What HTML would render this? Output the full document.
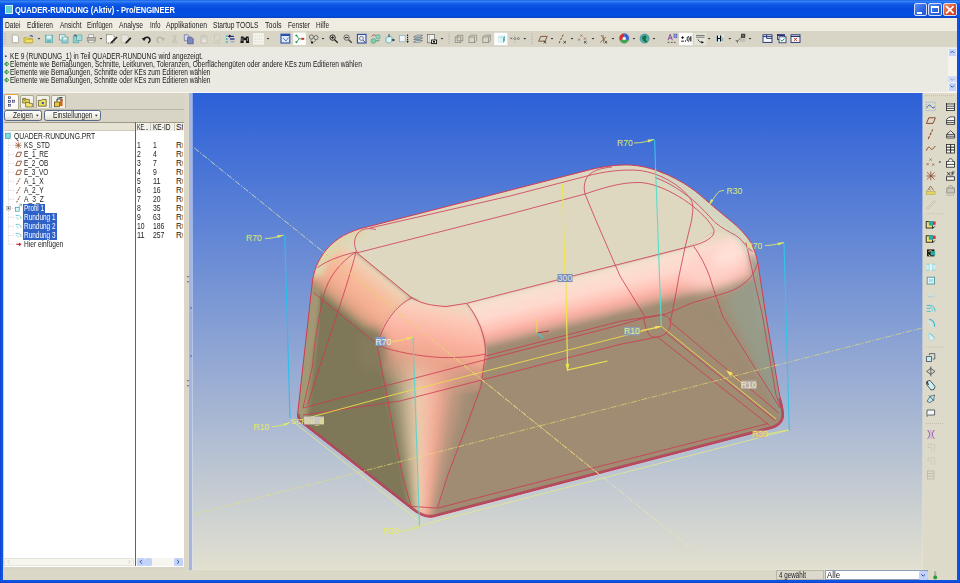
<!DOCTYPE html>
<html><head><meta charset="utf-8">
<style>
*{box-sizing:border-box;margin:0;padding:0}
html,body{width:960px;height:583px;overflow:hidden;background:#ECE9D8}
body{position:relative;font-family:"Liberation Sans",sans-serif;font-size:8.2px;color:#222;line-height:1.15}
.abs{position:absolute}
.t{position:absolute;white-space:pre;transform-origin:0 50%;line-height:1.15}
#title{left:0;top:0;width:960px;height:18px;background:linear-gradient(#1E62E6 0,#3380F6 8%,#0F5AE6 22%,#034ADE 50%,#0450E2 85%,#0A42C6 100%)}
#menubar{left:3px;top:18px;width:954px;height:13px;background:#EFEDE2}
#toolbar{left:3px;top:31px;width:954px;height:16px;background:#D8D5C7}
#msg{left:3px;top:47px;width:954px;height:46px;background:#EBEAE2}
#lframe{left:0;top:18px;width:3px;height:565px;background:linear-gradient(90deg,#0A3FD0,#1458E4 60%,#0A4FDB)}
#rframe{left:957px;top:18px;width:3px;height:565px;background:linear-gradient(90deg,#0A4FDB,#1458E4 40%,#0A3FD0)}
#bframe{left:0;top:580px;width:960px;height:3px;background:linear-gradient(#0A4FDB,#1458E4 40%,#0A3FD0)}
#leftpanel{left:3px;top:93px;width:181px;height:487px;background:#D8D5C6}
#split1{left:184px;top:93px;width:4.5px;height:477px;background:#DAD7C8}
#split2{left:188.5px;top:93px;width:4.5px;height:477px;background:linear-gradient(90deg,#A6B5DF 0,#A6B5DF 75%,#DCE5FA 80%,#DCE5FA 100%)}
#rtool{left:922.5px;top:93px;width:34.5px;height:487px;background:#DDDACA}
#status{left:3px;top:569.5px;width:920px;height:10.5px;background:#DBD8C8}
.wb{position:absolute;top:3px;width:13.5px;height:13.4px;border:0.8px solid #D4DEFC;border-radius:2px}
.btn{position:absolute;top:109.5px;height:11px;border:1px solid #5A6A8A;border-radius:2.5px;background:linear-gradient(#FFFFFF,#F2F0E6 60%,#DDD9CB)}
.sel{position:absolute;left:23px;height:9px;background:#2F62C8}
</style></head><body>
<div id="title" class="abs"></div>
<div class="abs" style="left:4.5px;top:5px;width:8px;height:8.5px;background:#5CCFD2;border:1px solid #DFF4F6"></div>
<div class="wb" style="left:913.5px;background:linear-gradient(135deg,#5B90F5,#2A62E0 60%,#2456D0)"><div class="abs" style="left:2.5px;top:7.5px;width:5px;height:2px;background:#fff"></div></div>
<div class="wb" style="left:928px;background:linear-gradient(135deg,#5B90F5,#2A62E0 60%,#2456D0)"><div class="abs" style="left:2px;top:2px;width:7.5px;height:7px;border:1px solid #fff;border-top-width:2px"></div></div>
<div class="wb" style="left:943px;background:linear-gradient(135deg,#F09878,#D8502C 55%,#C23A1C)"><svg class="abs" style="left:0;top:0" width="11.5" height="11" viewBox="0 0 11.5 11"><path d="M2.2,2.2 L9.6,9.4 M9.6,2.2 L2.2,9.4" stroke="#fff" stroke-width="1.8"/></svg></div>
<div id="menubar" class="abs"></div>
<div id="toolbar" class="abs"></div>
<div id="msg" class="abs"></div>
<!-- msg scrollbar -->
<div class="abs" style="left:948px;top:47.5px;width:8.5px;height:44px;background:#F4F3EC"></div>
<div class="abs" style="left:948px;top:47.5px;width:8.5px;height:9.5px;background:#C6D4F8;border:0.5px solid #EEF2FF;border-radius:1.5px"></div>
<div class="abs" style="left:948px;top:82px;width:8.5px;height:9.5px;background:#C6D4F8;border:0.5px solid #EEF2FF;border-radius:1.5px"></div>
<div class="abs" style="left:948px;top:76px;width:8.5px;height:6px;background:#D4DDF6"></div>
<div id="leftpanel" class="abs"></div>
<!-- tabs -->
<div class="abs" style="left:3.5px;top:93.5px;width:15.5px;height:15.5px;background:#FBFAF6;border:1px solid #A8A594;border-bottom:none;border-top:1.5px solid #E8A33A;border-radius:2px 2px 0 0"></div>
<div class="abs" style="left:20px;top:95px;width:14px;height:13px;background:#F4F2E8;border:1px solid #A8A594;border-bottom:none;border-radius:2px 2px 0 0"></div>
<div class="abs" style="left:35.5px;top:95px;width:14.5px;height:13px;background:#F4F2E8;border:1px solid #A8A594;border-bottom:none;border-radius:2px 2px 0 0"></div>
<div class="abs" style="left:51px;top:95px;width:14.5px;height:13px;background:#F4F2E8;border:1px solid #A8A594;border-bottom:none;border-radius:2px 2px 0 0"></div>
<div class="abs" style="left:3.5px;top:108.5px;width:180.5px;height:1px;background:#B9B6A6"></div>
<div class="btn" style="left:3.7px;width:38.5px"></div>
<div class="btn" style="left:43.7px;width:57.5px"></div>
<!-- tree -->
<div class="abs" style="left:3.5px;top:121.5px;width:180px;height:445px;background:#FFFFFF;border-top:1px solid #9D9A8A"></div>
<div class="abs" style="left:4px;top:122.5px;width:131px;height:8px;background:#E6E3D4;border-bottom:1px solid #CFCBBB"></div>
<div class="abs" style="left:134.7px;top:122px;width:1px;height:444px;background:#5F6470"></div>
<div class="abs" style="left:135.5px;top:122.5px;width:48px;height:8px;background:#F1F0E9"></div><div class="abs" style="left:150px;top:122.5px;width:0.6px;height:8px;background:#C9C6B8"></div>
<div class="abs" style="left:173.5px;top:122.5px;width:0.6px;height:8px;background:#C9C6B8"></div>
<div class="sel" style="top:204px;width:21.5px"></div>
<div class="sel" style="top:213px;width:33.5px"></div>
<div class="sel" style="top:222px;width:33.5px"></div>
<div class="sel" style="top:231px;width:33.5px"></div>
<!-- tree scrollbars -->
<div class="abs" style="left:4px;top:557.5px;width:130px;height:8.5px;background:#F6F5EE;border:0.5px solid #E6E4D8"></div>
<div class="abs" style="left:136px;top:557.5px;width:47.5px;height:8.5px;background:#F6F5F0"></div>
<div class="abs" style="left:136.5px;top:557.5px;width:8.5px;height:8.5px;background:#C3D2F8;border-radius:1.5px"></div>
<div class="abs" style="left:145px;top:557.5px;width:6.5px;height:8.5px;background:#C3D2F8;border-radius:1.5px"></div>
<div class="abs" style="left:173.5px;top:557.5px;width:9px;height:8.5px;background:#C3D2F8;border-radius:1.5px"></div>
<div id="split1" class="abs"></div><div id="split2" class="abs"></div>
<div id="rtool" class="abs"></div><div class="abs" style="left:3px;top:92px;width:954px;height:1px;background:#F6F5EE"></div>
<div id="status" class="abs"></div>
<div class="abs" style="left:776px;top:570px;width:48px;height:10px;background:#DDD9CC;border:0.5px solid #B9B6A6"></div>
<div class="abs" style="left:824.5px;top:570px;width:103px;height:10px;background:#FFFFFF;border:0.5px solid #8D9CB8"></div>
<div class="abs" style="left:919px;top:570.5px;width:8.5px;height:9px;background:#C3D2F8;border-radius:1.5px"></div>
<svg class="abs" style="left:0;top:0" width="960" height="583" viewBox="0 0 960 583">
<defs>
<linearGradient id="bg" x1="0" y1="93" x2="0" y2="569.5" gradientUnits="userSpaceOnUse">
<stop offset="0" stop-color="#2C60D8"/>
<stop offset="1" stop-color="#E2E0D0"/>
</linearGradient>
<clipPath id="vpc"><rect x="192.5" y="93" width="730" height="476.5"/></clipPath>
<path id="silp" d="M365,227.5 L585,171 C600,167 615,164.5 630,165 C650,166 672,175 690.3,187.6 C697,192 704,198.5 710.3,203.9 C718,210.5 726,217 732.9,222.7 C738,227 742,231 745.4,235.2 C749.5,240 752.5,245 754.2,250.2 C756,255 757,259 758,264 L766,316 L779.5,395 C782,404 784.3,412 783.2,418 C782,423.5 777.5,427 771,428.6 L433,517 C425,518.5 416,513 409,507 L302.3,423.4 C298.5,420.5 297.3,418 297.6,414 L307,330 L312,285 C313,272 318,260 326,250 C336,238 350,231 365,227.5 Z"/>
<clipPath id="sil"><use href="#silp"/></clipPath>
<filter id="b1" x="-20%" y="-20%" width="140%" height="140%"><feGaussianBlur stdDeviation="1.2"/></filter>
<filter id="b2" x="-20%" y="-20%" width="140%" height="140%"><feGaussianBlur stdDeviation="2"/></filter>
<filter id="b3" x="-20%" y="-20%" width="140%" height="140%"><feGaussianBlur stdDeviation="3"/></filter>
<filter id="b5" x="-30%" y="-30%" width="160%" height="160%"><feGaussianBlur stdDeviation="5"/></filter>
<filter id="b8" x="-40%" y="-40%" width="180%" height="180%"><feGaussianBlur stdDeviation="8"/></filter>
<filter id="b12" x="-50%" y="-50%" width="200%" height="200%"><feGaussianBlur stdDeviation="12"/></filter>
<linearGradient id="gband" gradientUnits="userSpaceOnUse" x1="575" y1="275.3" x2="588" y2="326">
<stop offset="0" stop-color="#E9DAC4"/>
<stop offset="0.12" stop-color="#F8E0D0"/>
<stop offset="0.38" stop-color="#FFD8CD"/>
<stop offset="0.58" stop-color="#FFC4B8"/>
<stop offset="0.69" stop-color="#FCB4A8"/>
<stop offset="0.8" stop-color="#E6A898"/>
<stop offset="0.9" stop-color="#C29C88" stop-opacity="0.85"/>
<stop offset="1" stop-color="#A08B73" stop-opacity="0"/>
</linearGradient>
<linearGradient id="glband" gradientUnits="userSpaceOnUse" x1="384" y1="275" x2="347.2" y2="319.8">
<stop offset="0" stop-color="#E6D8BC"/>
<stop offset="0.12" stop-color="#F2CDB0"/>
<stop offset="0.35" stop-color="#F8BA9C"/>
<stop offset="0.62" stop-color="#F4AE92"/>
<stop offset="0.8" stop-color="#DCA082"/>
<stop offset="0.92" stop-color="#A89070" stop-opacity="0.9"/>
<stop offset="1" stop-color="#7F7859" stop-opacity="0"/>
</linearGradient>
<linearGradient id="gsph" gradientUnits="userSpaceOnUse" x1="440" y1="305" x2="422" y2="392">
<stop offset="0" stop-color="#F0D6C0"/>
<stop offset="0.12" stop-color="#FCCAB8"/>
<stop offset="0.35" stop-color="#FCB5A2"/>
<stop offset="0.55" stop-color="#F2A891"/>
<stop offset="0.68" stop-color="#E8A089" stop-opacity="0.7"/>
<stop offset="1" stop-color="#E09C86" stop-opacity="0"/>
</linearGradient>
</defs>
<g clip-path="url(#vpc)">
<rect x="192" y="93" width="731" height="477" fill="url(#bg)"/>
<g id="obj" clip-path="url(#sil)">
<rect x="290" y="160" width="500" height="360" fill="#A08B73"/>
<!-- left face olive -->
<path d="M290,430 L300,280 L330,262 L390,330 L376,345 L412,516 L300,428 Z" fill="#7F7859" filter="url(#b1)"/>
<!-- right grey-green side -->
<path d="M727,300 L760,272 L790,300 L790,430 L779,414 Z" fill="#8F9A88" filter="url(#b3)"/>
<path d="M716,300 L756,272 L770,330 L782,412 Z" fill="#9E9C88" filter="url(#b8)" opacity="0.6"/>
<!-- column -->
<g filter="url(#b1)">
<path d="M366.0,300 L372.9,300 L382.2,350 L410.8,520 L409.0,520 L376.0,350 Z" fill="#857D5E"/>
<path d="M372.3,300 L379.2,300 L387.7,350 L412.3,520 L410.4,520 L381.6,350 Z" fill="#918869"/>
<path d="M378.6,300 L385.5,300 L393.2,350 L413.8,520 L411.9,520 L387.1,350 Z" fill="#9E9373"/>
<path d="M384.9,300 L391.8,300 L398.8,350 L415.2,520 L413.4,520 L392.6,350 Z" fill="#AFA180"/>
<path d="M391.2,300 L398.1,300 L404.4,350 L416.6,520 L414.8,520 L398.2,350 Z" fill="#C0AF8D"/>
<path d="M397.5,300 L404.4,300 L409.9,350 L418.1,520 L416.2,520 L403.8,350 Z" fill="#CFBA99"/>
<path d="M403.8,300 L410.7,300 L415.5,350 L419.5,520 L417.7,520 L409.3,350 Z" fill="#DDC2A2"/>
<path d="M410.1,300 L417.0,300 L421.0,350 L421.0,520 L419.1,520 L414.9,350 Z" fill="#EBC9AB"/>
<path d="M416.4,300 L423.3,300 L426.6,350 L422.4,520 L420.6,520 L420.4,350 Z" fill="#F0C4A9"/>
<path d="M422.7,300 L429.6,300 L432.1,350 L423.9,520 L422.1,520 L425.9,350 Z" fill="#F4BDA6"/>
<path d="M429.0,300 L435.9,300 L437.7,350 L425.3,520 L423.5,520 L431.5,350 Z" fill="#F4B6A0"/>
<path d="M435.3,300 L442.2,300 L443.2,350 L426.8,520 L424.9,520 L437.1,350 Z" fill="#F0AF99"/>
<path d="M441.6,300 L448.5,300 L448.8,350 L428.2,520 L426.4,520 L442.6,350 Z" fill="#EBA891"/>
<path d="M447.9,300 L454.8,300 L454.3,350 L429.7,520 L427.9,520 L448.1,350 Z" fill="#DDA28C"/>
<path d="M454.2,300 L461.1,300 L459.9,350 L431.1,520 L429.3,520 L453.7,350 Z" fill="#CF9E86"/>
<path d="M460.5,300 L467.4,300 L465.4,350 L432.6,520 L430.8,520 L459.2,350 Z" fill="#C19881"/>
<path d="M466.8,300 L473.7,300 L471.0,350 L434.0,520 L432.2,520 L464.8,350 Z" fill="#B7957D"/>
<path d="M473.1,300 L480.0,300 L476.5,350 L435.5,520 L433.6,520 L470.4,350 Z" fill="#AE9179"/>
<path d="M479.4,300 L486.3,300 L482.1,350 L436.9,520 L435.1,520 L475.9,350 Z" fill="#A58E76"/>
<path d="M485.7,300 L492.6,300 L487.6,350 L438.4,520 L436.6,520 L481.4,350 Z" fill="#A28C74"/>
</g>
<!-- top face beige -->
<path d="M300,300 L310,250 L365,220 L585,165 L640,160 L760,235 L765,262 L712,232 L700,240 L685,247.5 L575,276 L465,304 L445,306 L430,305 L410,296 L356,252 L330,275 Z" fill="#DED8C0"/>
<path d="M297,418 L307,330 L312,285 L316,266" fill="none" stroke="#A89C78" stroke-width="20" filter="url(#b2)" opacity="0.9"/>
<!-- left-front band -->
<path d="M356,252 L412,298 C400,303 385,318 377,345 L372,356 L300,300 L300,260 L330,240 Z" fill="url(#glband)" filter="url(#b2)"/>
<!-- silhouette-side strips -->
<path d="M314,276 C315,268 319,259 326,250 C336,238 350,231 365,227.5" fill="none" stroke="#DFD6B0" stroke-width="18" filter="url(#b3)"/>
<!-- sphere corner front-left -->
<path d="M412,298 C420,303 430,305.5 446,306.5 L465.5,303 C477,316 486,335 486.5,356 L478,392 L390,400 L376.6,345 C380,325 392,308 412,298 Z" fill="url(#gsph)" filter="url(#b1)"/>
<ellipse cx="372" cy="350" rx="14" ry="22" fill="#857C5E" filter="url(#b5)" opacity="0.9"/>
<!-- front band -->
<path d="M465.5,303 L685,247.5 L712,232 L750,238 L775,300 L700,322 L486,378 L486.5,356 C486,335 477,316 465.5,303 Z" fill="url(#gband)" filter="url(#b1)"/>
<!-- right sphere highlight -->
<ellipse cx="718" cy="266" rx="34" ry="20" fill="#FFD2C8" filter="url(#b8)" transform="rotate(-22 718 266)"/>
<ellipse cx="728" cy="255" rx="16" ry="9" fill="#FFE2D9" filter="url(#b5)" transform="rotate(-28 728 255)"/>
<!-- upper right fillet grey-beige -->
<path d="M662,172 C672,176 682,181 690.3,187.6 C697,192 704,198.5 710.3,203.9 C718,210.5 726,217 732.9,222.7 C738,227 742,231 745.4,235.2 C749.5,240 752.5,245 754.2,250.2" fill="none" stroke="#D4D6C2" stroke-width="19" filter="url(#b2)"/>
<path d="M748,250 L760,262 L770,330 L760,330 Z" fill="#99A090" filter="url(#b3)"/>
</g>
<use href="#silp" fill="none" stroke="#D23A55" stroke-width="1"/>
<g id="redlines" fill="none" stroke="#CE3852" stroke-width="0.9" opacity="0.88">
<path d="M370,228 L510,196 L585,176.5 C605,171 625,169 640,170.5 C660,173 680,185 690,198 C694,204 693,210 691.7,220 L685,247.5 L679,276 L675.7,295 L670.3,322"/>
<path d="M585,194 C583,186 585,178 590,174 C595,170 602,168 612,167"/>
<path d="M585,194 L595.8,220 L620,276 L645.8,318"/>
<path d="M357.7,252.7 L510,214 L585,194 C600,189 620,182 640,182.5 C660,183.5 690,200 707.5,220 C712,226 716,230 713,235 C709,241 697,245 687.5,247 L566.7,277.5 L466.7,303.3 L446,306.5 C430,305.5 420,303 412,298 L356,252"/>
<path d="M357.5,252.5 C353,246 354,238 358,233 C362,229 368,227.5 376,229.5"/>
<path d="M356,252 C343,255 328,260 317.5,267.5"/>
<path d="M356,252 C340,262 328,278 323.8,295 C318,320 314,345 312.5,366 L303,408"/>
<path d="M356,252 C352,268 345,290 337.6,312.7 L320,366 L307.5,405"/>
<path d="M313.5,292.5 L377,344"/>
<path d="M412,298 C400,303 385,318 377,345 L386,392 L402.5,476 L411,506"/>
<path d="M466.7,303.3 C477,316 486,335 485.4,353.3 L481,386.7 L468.75,420 L447.5,476 L437.5,507.5"/>
<path d="M376.6,345 C395,352 420,356.5 441.7,357.5 C460,358 475,356.5 485.4,354"/>
<path d="M303,408 L400,382 L486,359.5 L620,325 L643.8,318.2"/>
<path d="M485.4,354 L486.4,355.8 L620,321.3 L666.7,313.75"/>
<path d="M303,415 L400,401 L620,344.4 L657.5,337"/>
<path d="M643.8,317.5 C644,322 646,330 649.4,335 C652,337.5 655,337.5 657.5,337 C661,336.5 663,335.5 665,333.8 C668,331 670,329 670.3,325 C671,322 670,318 666.3,316.3 C664,315 662,315 661.3,315 L643.8,318.2"/>
<path d="M670.5,322 L779,413"/>
<path d="M666,333 L775,420.5"/>
<path d="M657.5,337 L769,425"/>
<path d="M693.75,246.4 C700,255 706,266 710,277.7 C713,288 717,299 722.5,316 L780,408"/>
<path d="M758,261.7 C756,268 754,273 750,278 C742,286 735,290 725,293 C712,297 702,300 691.7,303 L666.7,313.75"/>
<path d="M746,242.5 L762.5,316 L776,395 L780.7,407.5"/>
<path d="M411.4,506.4 L437.7,508.1 L580,471.4 L768,423.5"/>
<path d="M655,177.5 C668,182 682,191 692.8,200 C701,207 708,215 715.3,222.7 C722,228 729,232 735.4,235.2 C740,238 744,243 748,248 L752.7,251.5"/>
</g>
<path d="M298.5,414 C298.3,418 299.5,420 303,422.7 L409.6,506.2 C416.5,512 425,517.3 433,515.8 L770.8,427.5 C776.5,426 780.5,423 782,418 C783.2,412 781.5,405 779.5,398" fill="none" stroke="#B4445A" stroke-width="2.4" opacity="0.85"/>


<g id="ann" fill="none">
<!-- dashed datum axes -->
<path d="M194.3,148 L690,547.5" stroke="#EDEBB0" stroke-width="0.85" stroke-dasharray="6 1.5 1.5 1.5" opacity="0.85"/>
<path d="M194.3,148 L690,547.5" stroke="#E8C66C" stroke-width="1" stroke-dasharray="6 1.5 1.5 1.5" clip-path="url(#sil)"/>
<path d="M193.75,514.5 L922,328" stroke="#E9E36E" stroke-width="0.8" stroke-dasharray="6 1.5 1.5 1.5" opacity="0.8"/>
<!-- outer sketch yellow -->
<path d="M291,420 L419,521 L420,525.5 L789,430" stroke="#E4EA86" stroke-width="0.9" opacity="0.9"/>
<!-- yellow solids -->
<path d="M562.5,184 L565,274 M566,282 L567.5,370 L607.5,361" stroke="#EEE64A" stroke-width="1.1"/>
<path d="M566,364 L567.5,371 L569,364 Z" fill="#EEE64A" stroke="#EEE64A" stroke-width="0.6"/>
<path d="M300,420 L400,393 L661.3,326.3 L776,419" stroke="#ECDD4C" stroke-width="0.9"/>
<!-- cyan verticals -->
<path d="M284.75,235 L290,418" stroke="#2EBEEA" stroke-width="1.1"/>
<path d="M654.6,139.5 L655.6,168" stroke="#34C4E8" stroke-width="1.1"/><path d="M655.6,168 L661.3,326" stroke="#5CDCCB" stroke-width="1.1"/>
<path d="M784,242.5 L789.3,431" stroke="#34C4E8" stroke-width="1.1"/>
<path d="M413,337 L419.5,526" stroke="#63D2C8" stroke-width="1.1"/>
<!-- leaders -->
<g stroke="#DCEB6A" stroke-width="0.9">
<path d="M265,238.5 C272,238.5 277,237 283.5,235"/>
<path d="M634,143 C642,143 648,141 654,139.5"/>
<path d="M724,190.5 C720,190.5 718,192 716,195 L709,205"/>
<path d="M765,245.5 C772,245.5 778,244 784,242.5"/>
<path d="M392,341.5 C400,341 406,339 413,337" stroke="#F2E45A"/>
<path d="M272,426.5 C279,426.5 284,425 290,422.5"/>
<path d="M400,531 C408,531 414,529 420,526"/>
<path d="M766,434 L789,430"/>
<path d="M641,330.5 L661,326.5" stroke="#F2E45A"/>
<path d="M731,374 L742,383" stroke="#F2E45A"/>
</g>
<g fill="#DCEB6A" stroke="none">
<path d="M283.5,235 L277,235.3 L278,238 Z"/>
<path d="M654,139.5 L647.5,139.6 L648.5,142.4 Z"/>
<path d="M709,205 L711,199 L713.4,200.8 Z"/>
<path d="M784,242.5 L777.5,242.7 L778.5,245.5 Z"/>
<path d="M413,337 L406.5,337.3 L407.5,340 Z" fill="#F2E45A"/>
<path d="M290,422.5 L283.7,423.4 L285,426 Z"/>
<path d="M420,526 L413.8,527 L415,529.6 Z"/>
<path d="M661,326.5 L655,326 L655.6,329 Z" fill="#F2E45A"/>
<path d="M726,370 L733,373 L730,376 Z" fill="#F2E45A"/>
</g>
<!-- csys -->
<path d="M537,319 L537,333" stroke="#EEDC40" stroke-width="1"/>
<path d="M537,333 L549,331" stroke="#C03040" stroke-width="1"/>
<path d="M537,333 L543,338" stroke="#40C8C8" stroke-width="1.4"/>
</g>
<g id="lbl" font-family="Liberation Sans, sans-serif" font-size="8.6" fill="#DCEB6A" text-anchor="middle">
<text x="254" y="241">R70</text>
<text x="625" y="145.7">R70</text>
<text x="734.5" y="194">R30</text>
<text x="754.5" y="249">R70</text>
<rect x="375.5" y="337" width="10" height="9" fill="#8098C8"/>
<text x="383.5" y="344.8" fill="#F4F6E0">R70</text>
<text x="261.5" y="429.7" fill="#E4EA62">R10</text>
<text x="391.5" y="534" fill="#E8EA5E">R30</text>
<rect x="754" y="430.5" width="12" height="7.5" fill="#C9B0A0" opacity="0.8"/>
<text x="760" y="437.3" fill="#F2E45A">R30</text>
<rect x="624" y="327" width="16" height="8.5" fill="#8C9CC0" opacity="0.85"/>
<text x="632" y="334.2" fill="#E6F07A">R10</text>
<rect x="741" y="380.5" width="15.5" height="8.5" fill="#B8B0B4" opacity="0.9"/>
<text x="748.7" y="387.8" fill="#F0F0B0">R10</text>
<rect x="557.5" y="274" width="15" height="8" fill="#7A8CB4"/>
<text x="565" y="281" fill="#DDE3F0">300</text>
<rect x="304" y="416.5" width="20" height="8" fill="#D8D4D0" opacity="0.85"/>
<text x="307.5" y="423.8" fill="#E6E87A" font-size="7.6">SCHNI_B</text>
</g>
</g>
</svg>

<svg class="abs" style="left:0;top:0" width="960" height="100" viewBox="0 0 960 100" fill="none">
<!-- grips / separators -->
<g stroke="#A9A696" stroke-width="0.8" stroke-dasharray="1 1">
<path d="M5,33 V45"/><path d="M449,33 V45"/><path d="M532,33 V45"/>
</g>
<!-- dropdown arrows -->
<g fill="#222">
<path d="M37.7,38 h2.6 l-1.3,1.6z"/><path d="M99.7,38 h2.6 l-1.3,1.6z"/><path d="M266.7,38 h2.6 l-1.3,1.6z"/><path d="M321.7,38 h2.6 l-1.3,1.6z"/><path d="M440.7,38 h2.6 l-1.3,1.6z"/><path d="M523.5,38 h2.6 l-1.3,1.6z"/><path d="M550.7,38 h2.6 l-1.3,1.6z"/><path d="M570.7,38 h2.6 l-1.3,1.6z"/><path d="M591.7,38 h2.6 l-1.3,1.6z"/><path d="M611.7,38 h2.6 l-1.3,1.6z"/><path d="M632.7,38 h2.6 l-1.3,1.6z"/><path d="M652.7,38 h2.6 l-1.3,1.6z"/><path d="M707.9,38 h2.6 l-1.3,1.6z"/><path d="M728.5,38 h2.6 l-1.3,1.6z"/><path d="M748.7,38 h2.6 l-1.3,1.6z"/>
</g>
<!-- new -->
<path d="M12.3,35 h4.3 l2,2 v5.7 h-6.3z" fill="#FDFDFB" stroke="#9A9A94" stroke-width="0.7"/>
<!-- open -->
<path d="M24,37.5 h3 l1,1 h4.5 v4.3 h-8.5z" fill="#E9D34A" stroke="#A89A30" stroke-width="0.6"/>
<path d="M24.2,42.6 l2,-3 h7 l-1.2,3z" fill="#F4E46C" stroke="#A89A30" stroke-width="0.5"/>
<path d="M29.5,36.3 c1.2,-1.2 2.3,-1 3,0" stroke="#2A3A9A" stroke-width="0.9"/><path d="M32,35.2 l1,1.6 -1.8,0.2z" fill="#2A3A9A"/>
<!-- save -->
<rect x="45.3" y="35.2" width="7.4" height="7.4" fill="#8FD0D2" stroke="#5AA6AA" stroke-width="0.7"/><rect x="46.8" y="35.6" width="4.4" height="3" fill="#E4F4F4"/><rect x="47" y="40" width="3.8" height="2.3" fill="#6DB8BC"/>
<!-- save copy -->
<rect x="59.6" y="34.8" width="5.5" height="5.2" fill="#F2F8F8" stroke="#5A8E96" stroke-width="0.7"/><rect x="62" y="37" width="6" height="6" fill="#8FD0D2" stroke="#5AA6AA" stroke-width="0.7"/><rect x="63.3" y="37.4" width="3.4" height="2.2" fill="#E4F4F4"/>
<!-- backup -->
<rect x="73.2" y="36.8" width="5.6" height="6" fill="#8FD0D2" stroke="#5AA6AA" stroke-width="0.7"/><rect x="76.5" y="35" width="5.4" height="5.6" fill="#A6DADB" stroke="#5AA6AA" stroke-width="0.7"/><path d="M73.6,35.6 l2,-0.8 0.6,1.8" stroke="#223" stroke-width="0.8"/>
<!-- print -->
<rect x="88.7" y="34.8" width="5" height="3" fill="#F6F6F2" stroke="#8C8C86" stroke-width="0.6"/><rect x="87.2" y="37.6" width="8.2" height="3.6" fill="#B9B8B0" stroke="#807F78" stroke-width="0.6"/><rect x="88.5" y="40.6" width="5.6" height="2.2" fill="#E8E8E2" stroke="#8C8C86" stroke-width="0.5"/>
<!-- doc pencil 1 -->
<path d="M106.5,34.6 h6 l1.6,1.6 v6.8 h-7.6z" fill="#FAFAF6" stroke="#333" stroke-width="0.6" stroke-dasharray="1.2 0.8"/><path d="M111,41.8 l5.4,-5.4 1.2,1.2 -5.4,5.4 -1.8,0.5z" fill="#1E1E1E"/>
<!-- doc pencil 2 grey -->
<path d="M121.3,34.8 h5.4 l1.6,1.6 v6.4 h-7z" fill="#E6E4DA" stroke="#B4B2A6" stroke-width="0.6"/><path d="M125.6,42 l4.6,-4.8 1.2,1.2 -4.6,4.8 -1.6,0.4z" fill="#1E1E1E"/>
<!-- undo -->
<path d="M144.2,39.6 c0.4,-3 5.6,-3.4 5.8,0.6 c0,1.3 -0.8,2.2 -2,2.5" stroke="#1A1A1A" stroke-width="1.5"/><path d="M141.8,38.2 l4,-0.6 -1.6,3.6z" fill="#1A1A1A"/>
<!-- redo grey -->
<path d="M162.8,39.6 c-0.4,-3 -5.6,-3.4 -5.8,0.6 c0,1.3 0.8,2.2 2,2.5" stroke="#B9B7AC" stroke-width="1.5"/><path d="M165.2,38.2 l-4,-0.6 1.6,3.6z" fill="#B9B7AC"/>
<!-- cut grey -->
<path d="M173,35 l3,6 M176.4,35 l-3,6" stroke="#BFBDB1" stroke-width="0.9"/><circle cx="173.2" cy="42" r="1" stroke="#BFBDB1" stroke-width="0.7"/><circle cx="176.2" cy="42" r="1" stroke="#BFBDB1" stroke-width="0.7"/>
<!-- copy -->
<path d="M184.3,34.8 h3.6 l1.4,1.4 v4.6 h-5z" fill="#D6DAEC" stroke="#5C679C" stroke-width="0.7"/><path d="M187.6,37.2 h4 l1.6,1.6 v5 h-5.6z" fill="#7C88C0" stroke="#4A548A" stroke-width="0.7"/>
<!-- paste grey -->
<rect x="200.4" y="36.4" width="6.6" height="6.8" fill="#DCD9CC" stroke="#C2BFB2" stroke-width="0.7"/><rect x="202.2" y="35" width="3" height="2" fill="#CFCCC0" stroke="#C2BFB2" stroke-width="0.5"/><rect x="202" y="39" width="4.6" height="3.8" fill="#E8E6DC" stroke="#C6C3B6" stroke-width="0.5"/>
<!-- paste special grey -->
<rect x="214.6" y="35" width="5.2" height="8" fill="#DCD9CC" stroke="#C6C3B6" stroke-width="0.7"/><rect x="216" y="39.4" width="3.4" height="3.2" fill="#CFCCC0"/>
<!-- regenerate -->
<circle cx="226.8" cy="36" r="1.1" fill="#4FB8C0"/><circle cx="226.8" cy="39" r="1.1" fill="#4FB8C0"/><circle cx="226.8" cy="42" r="1.1" fill="#4FB8C0"/><path d="M228,36.4 h6 M230,39 h4.5" stroke="#2A3C9C" stroke-width="1.3"/><path d="M229,34.6 l2.6,1.6 -2.6,1.6z" fill="#222"/><rect x="230.5" y="40.8" width="4" height="1.8" fill="#A8B0C8"/>
<!-- binoculars -->
<path d="M241,36.5 h2.6 v6.4 h-3.2z M246,36.5 h2.6 l0.6,6.4 h-3.2z" fill="#161616"/><rect x="243.4" y="37.6" width="2.8" height="2.6" fill="#161616"/><path d="M242,38 v3 M247.4,38 v3" stroke="#F0F0F0" stroke-width="0.6"/>
<!-- select box white -->
<rect x="253.2" y="33.2" width="10.6" height="11.4" fill="#F6F5EE"/><path d="M254.6,36 h7.6 M254.6,39 h7.6 M254.6,42 h7.6" stroke="#C9C7BB" stroke-width="0.7" stroke-dasharray="1.4 0.8"/>
<!-- blue sketch icon -->
<rect x="281" y="34.2" width="8.8" height="8.8" fill="#DDE8F8" stroke="#2450B0" stroke-width="1.1"/><rect x="281" y="34.2" width="8.8" height="1.8" fill="#2450B0"/><path d="M283,38 l3,3 2.4,-3.4" stroke="#3A66C0" stroke-width="0.8"/>
<!-- tree icon white bg -->
<rect x="293.2" y="32.6" width="12.6" height="12.4" fill="#FDFDFB"/><path d="M296.5,35.6 l2.6,3.2 -2.6,3.2 M299.1,38.8 h4" stroke="#2A7A4A" stroke-width="0.8"/><circle cx="296.4" cy="35.5" r="1.1" fill="#2E9A50"/><circle cx="296.4" cy="42.1" r="1.1" fill="#2E9A50"/><path d="M301.6,37.4 l2.6,1.4 -2.6,1.4z" fill="#D02828"/><circle cx="303.4" cy="38.8" r="1" fill="#D02828"/>
<!-- glasses -->
<circle cx="311.4" cy="37" r="2.1" stroke="#5C5C5C" stroke-width="0.8"/><circle cx="316" cy="37.6" r="2.1" stroke="#5C5C5C" stroke-width="0.8"/><path d="M311,39.2 v2.6 M315.6,40 c0,1.2 -0.8,1.6 -1.6,1.6" stroke="#5C5C5C" stroke-width="0.7"/><rect x="311" y="41.6" width="2.2" height="1.8" fill="#111"/>
<!-- zoom in/out -->
<circle cx="332.6" cy="37.6" r="2.7" stroke="#1A1A1A" stroke-width="0.9"/><path d="M334.6,39.8 l3.2,3" stroke="#1A1A1A" stroke-width="1.2"/><path d="M331,37.6 h3.2 M332.6,36 v3.2" stroke="#1A1A1A" stroke-width="0.9"/>
<circle cx="346.6" cy="37.6" r="2.7" stroke="#5A5A5A" stroke-width="0.9"/><path d="M348.6,39.8 l3.2,3" stroke="#3A3A3A" stroke-width="1.2"/><path d="M345,37.6 h3.2" stroke="#1A1A1A" stroke-width="0.9"/>
<!-- refit -->
<rect x="357.4" y="34.4" width="8.6" height="8.6" fill="#E6ECF8" stroke="#2C4A9C" stroke-width="1.1"/><circle cx="361.4" cy="38.4" r="2" stroke="#555" stroke-width="0.7"/><path d="M362.8,40 l2.4,2.4" stroke="#333" stroke-width="0.9"/>
<!-- repaint/spin -->
<circle cx="373.4" cy="41" r="2.4" fill="#7FD0B0" stroke="#3C9C7C" stroke-width="0.6"/><circle cx="378" cy="36.8" r="2.2" fill="#8FD8C0" stroke="#3C9C7C" stroke-width="0.6"/><path d="M371.6,36.4 c1,-1.6 3,-1.8 4,-1" stroke="#B02828" stroke-width="0.8"/><path d="M376,40.6 c1.2,0.6 2.8,0.4 3.6,-0.6" stroke="#2C7C5C" stroke-width="0.8"/>
<!-- orient -->
<path d="M386,38 l3,-2 3,1.2 v4.2 l-3,1.8 -3,-1.4z" fill="#DDF2F2" stroke="#4AA8A8" stroke-width="0.7"/><path d="M389,34.2 v3 M391.6,40 l2.8,0" stroke="#134" stroke-width="0.9"/><path d="M392.8,38.6 l2,1.4 -2,1.4z" fill="#134"/>
<!-- view mgr -->
<rect x="399.6" y="35.4" width="5.6" height="6.4" fill="#F0F6F8" stroke="#8AB" stroke-width="0.7"/><path d="M407.6,34.6 v7.4" stroke="#1A1A1A" stroke-width="1.1" stroke-dasharray="1.4 0.8"/><path d="M406.4,41.2 l1.2,1.8 1.2,-1.8z" fill="#1A1A1A"/>
<!-- layers -->
<path d="M413.6,37 l3,-1.8 h6 l-3,1.8z" fill="#CFE8E8" stroke="#556" stroke-width="0.6"/><path d="M413.6,39.6 l3,-1.8 h6 l-3,1.8z" fill="#9FD0D0" stroke="#556" stroke-width="0.6"/><path d="M413.6,42.2 l3,-1.8 h6 l-3,1.8z" fill="#CFE8E8" stroke="#556" stroke-width="0.6"/>
<!-- view disp -->
<rect x="427.4" y="34.6" width="7" height="8.2" fill="#F2F2EC" stroke="#666" stroke-width="0.7"/><path d="M429.4,35 v7.6" stroke="#C0A0A0" stroke-width="0.6"/><rect x="431.6" y="40" width="5" height="3.6" fill="#F2F2EC" stroke="#111" stroke-width="0.9"/><rect x="433" y="41" width="2" height="1.6" fill="#111"/>
<!-- wireframe boxes grey -->
<g stroke="#8E8C82" stroke-width="0.8"><rect x="455.2" y="37" width="5.6" height="5.6"/><rect x="457.2" y="35.2" width="5.6" height="5.6"/><rect x="469" y="37" width="5.6" height="5.6"/><path d="M469,37 l2,-1.8 h5.6 v5.6 l-2,1.8"/><rect x="482.8" y="37" width="5.6" height="5.6"/><path d="M482.8,37 l2,-1.8 h5.6 v5.6 l-2,1.8 M488.4,37 l2,-1.8"/></g>
<!-- shaded cube white bg -->
<rect x="494.2" y="32.8" width="13.2" height="12.4" fill="#FCFDFD"/><path d="M497.6,38 l1.6,-2.2 h5.6 l-1.6,2.2z" fill="#BFE8EA"/><rect x="497.6" y="38" width="5.6" height="5" fill="#DDF4F4"/><path d="M503.2,38 l1.6,-2.2 v5 l-1.6,2.2z" fill="#3C9CA4"/>
<!-- datum disp -->
<path d="M510.6,37.6 l1.6,1.6 M512.2,37.6 l-1.6,1.6" stroke="#333" stroke-width="0.6"/><circle cx="514.8" cy="38.6" r="1" stroke="#555" stroke-width="0.6"/><circle cx="518.4" cy="38.6" r="1" stroke="#555" stroke-width="0.6"/><path d="M514.8,35 v1.6 M514.8,40.8 v2" stroke="#AAA" stroke-width="0.6"/>
<!-- plane -->
<path d="M538.6,41.2 l2.2,-4.8 h6.4 l-2.2,4.8z" stroke="#7A4A2A" stroke-width="0.9"/><path d="M543.6,41 l2.6,2.4 M546.2,41 l-2.6,2.4" stroke="#222" stroke-width="0.7"/>
<!-- axis -->
<path d="M559,43.2 l4.2,-8.6" stroke="#7A4A2A" stroke-width="1" stroke-dasharray="2.4 1.2"/><path d="M563.4,41 l2.6,2.4 M566,41 l-2.6,2.4" stroke="#222" stroke-width="0.7"/>
<!-- points -->
<g stroke="#8A5A3A" stroke-width="0.7"><path d="M580.4,34.6 l2,2 M582.4,34.6 l-2,2 M578,38.6 l2,2 M580,38.6 l-2,2 M584,37.6 l2,2 M586,37.6 l-2,2"/></g><path d="M584,41 l2.6,2.4 M586.6,41 l-2.6,2.4" stroke="#222" stroke-width="0.7"/>
<!-- csys -->
<path d="M601,35 l4,5.6 M603,35 l0.6,7.6 M600,42.6 l6,-5.6" stroke="#8A5A3A" stroke-width="0.8"/><path d="M604.6,41 l2.6,2.4 M607.2,41 l-2.6,2.4" stroke="#222" stroke-width="0.7"/>
<!-- color wheel -->
<circle cx="624.2" cy="38.4" r="4.8" fill="#E8E8E0" stroke="#666" stroke-width="0.5"/><path d="M624.2,38.4 L624.2,33.6 A4.8,4.8 0 0 0 620,40.8z" fill="#D83030"/><path d="M624.2,38.4 L620,40.8 A4.8,4.8 0 0 0 628.4,40.8z" fill="#38A848"/><path d="M624.2,38.4 L628.4,40.8 A4.8,4.8 0 0 0 624.2,33.6z" fill="#3860D0"/><circle cx="624.2" cy="38.4" r="1.7" fill="#F6F6F0"/>
<!-- globe -->
<circle cx="644.6" cy="38.6" r="4.6" fill="#4FB0B0" stroke="#2A7C80" stroke-width="0.5"/><path d="M642.4,36.2 l3,-1 1.4,2 -1.2,2.6 2,1.8 -1.2,1 -3,-1.6 -1.4,-2.6z" fill="#1C7048"/>
<!-- A.B -->
<path d="M668,40.2 l2.2,-5.8 2.2,5.8 M668.8,38.2 h2.8" stroke="#7A3CA0" stroke-width="0.9"/><rect x="673.6" y="33.8" width="3.6" height="4.2" fill="#5060B8"/><path d="M674.8,34.8 h1.2 v2.4 h-1.2z" stroke="#DDE" stroke-width="0.5"/><path d="M667.6,42.4 h1.8 M671,42.4 h1.6 M674,42.4 h1.6" stroke="#333" stroke-width="0.8"/>
<!-- +-.01 -->
<rect x="679" y="32.8" width="13.6" height="12.4" fill="#FDFDFB"/><path d="M681.2,37.6 h2.8 M682.6,36.2 v2.8 M681.2,41.2 h2.8" stroke="#111" stroke-width="0.9"/><rect x="685" y="40.4" width="1" height="1.2" fill="#111"/><path d="M688.2,36.4 c-1.4,0 -1.4,5 0,5 c1.4,0 1.4,-5 0,-5z" stroke="#111" stroke-width="0.9"/><path d="M690.8,36.2 v5.4" stroke="#111" stroke-width="1.1"/>
<!-- thread icon -->
<rect x="694" y="33" width="12.4" height="12" fill="#E6E4D8"/><path d="M696,35.4 h8.6 M696,37.2 h8.6" stroke="#6A6A64" stroke-width="0.9"/><path d="M698,39.4 c0.6,2 2,2.8 4.4,3" stroke="#111" stroke-width="0.8"/><path d="M701.6,41 l2.4,1.6 -2.6,1z" fill="#111"/>
<!-- Hi -->
<rect x="716" y="34.6" width="8" height="7.8" fill="#DCE8EC"/><path d="M717.4,35.6 v5.8 M720.6,35.6 v5.8 M717.4,38.5 h3.2" stroke="#0A0A0A" stroke-width="1.2"/><path d="M722.8,37.6 v3.8" stroke="#3C9CA0" stroke-width="0.8"/>
<!-- misc -->
<rect x="741" y="33.8" width="4.2" height="4" fill="#333"/><path d="M742,34.6 l2,2 M744,34.6 l-2,2" stroke="#DDD" stroke-width="0.5"/><path d="M741.4,37 l-4.4,5" stroke="#666" stroke-width="0.9"/><path d="M736,40.4 l2,2.8 M735.8,40.6 h2.2" stroke="#666" stroke-width="0.7"/><rect x="740" y="38.4" width="5.4" height="3.4" fill="#C2C0B4"/>
<!-- window icons -->
<rect x="763" y="34.8" width="9" height="7.6" fill="#F4F6FA" stroke="#1C2C6C" stroke-width="0.9"/><path d="M763,36.6 h9 M766.6,34.8 v3.6 h5.4" stroke="#1C2C6C" stroke-width="0.9"/>
<rect x="777.4" y="34.4" width="7" height="5" fill="#F4F6FA" stroke="#1C2C6C" stroke-width="0.8"/><path d="M777.4,35.4 h7" stroke="#1C2C6C" stroke-width="1.1"/><rect x="779" y="36.8" width="7" height="6" fill="#F4F6FA" stroke="#1C2C6C" stroke-width="0.8"/><path d="M780.6,39.8 l1.4,1.4 2.4,-2.6" stroke="#1E9A3C" stroke-width="1"/>
<rect x="791" y="34.8" width="9" height="7.6" fill="#F4F6FA" stroke="#1C2C6C" stroke-width="0.9"/><path d="M791,36.4 h9" stroke="#1C2C6C" stroke-width="1.1"/><path d="M794.2,38 l2.6,2.8 M796.8,38 l-2.6,2.8" stroke="#C42A1A" stroke-width="1"/>
<!-- message bullets -->
<circle cx="5.8" cy="56.2" r="0.9" fill="#2038A0"/>
<g fill="#2C8C3C"><path d="M4,64 l2.6,-2.6 2.6,2.6 -2.6,2.6z"/><path d="M4,72 l2.6,-2.6 2.6,2.6 -2.6,2.6z"/><path d="M4,80 l2.6,-2.6 2.6,2.6 -2.6,2.6z"/></g>
<g stroke="#DDF4DD" stroke-width="0.6"><path d="M5.2,64 h2.6 M6.8,63 l1,1 -1,1"/><path d="M5.2,72 h2.6 M6.8,71 l1,1 -1,1"/><path d="M5.2,80 h2.6 M6.8,79 l1,1 -1,1"/></g>
<!-- scroll arrows -->
<g stroke="#3C5CA8" stroke-width="1"><path d="M950.4,53 l1.9,-1.9 1.9,1.9"/><path d="M950.4,85.4 l1.9,1.9 1.9,-1.9"/><path d="M950.4,78.4 l1.9,1.9 1.9,-1.9" stroke="#8CA0D8"/></g>
</svg>
<svg class="abs" style="left:0;top:0" width="960" height="583" viewBox="0 0 960 583" fill="none">
<!-- right toolbar grips -->
<g stroke="#B4B1A2" stroke-width="0.7" stroke-dasharray="1 1"><path d="M925,95.6 h30"/><path d="M926,213.8 h17"/><path d="M926,347 h17"/><path d="M926,423.5 h17"/></g>
<!-- col1 -->
<rect x="926.2" y="102.2" width="9" height="8.4" stroke="#6C8CD0" stroke-width="0.6" stroke-dasharray="1 1"/><path d="M927,107.6 c1.4,-3 3,-3 4.4,-1 c1.2,1.8 2.4,1.6 3.4,0.4" stroke="#2C58B8" stroke-width="1"/>
<path d="M926.4,123.4 l2.4,-5.6 h6.6 l-2.4,5.6z" stroke="#8A4A2C" stroke-width="1"/>
<path d="M928.2,139 l4.4,-9.4" stroke="#8A4A2C" stroke-width="1.1" stroke-dasharray="3 1.2"/>
<path d="M926.4,150.6 c1.6,-4.6 3,-4 4.2,-2 c1,1.6 2.6,0.6 4.6,-2.6" stroke="#8A4A2C" stroke-width="1"/>
<g stroke="#8A5A3A" stroke-width="0.8"><path d="M929.6,158.6 l2,2 M931.6,158.6 l-2,2 M926.6,163.2 l2,2 M928.6,163.2 l-2,2 M932.2,163.6 l2,2 M934.2,163.6 l-2,2"/></g><path d="M938.6,161.4 h2.4 l-1.2,1.5z" fill="#222"/>
<path d="M927,172.4 l7.6,7 M934.6,172.4 l-7.6,7 M930.8,171.4 v9 M926.4,176 h9" stroke="#8A4A2C" stroke-width="0.8"/>
<path d="M927.6,190.4 l3,-4.4 3,4.4 M929,188.6 l1.6,1.8" stroke="#8A5A3A" stroke-width="0.8"/><rect x="926.4" y="191.6" width="8.6" height="2.6" fill="#E4D860" stroke="#A89C38" stroke-width="0.5"/>
<path d="M926.6,208.4 l7.6,-8 1.2,1.2 -7.6,8z" stroke="#BDBAAE" stroke-width="0.7"/>
<!-- analysis icons -->
<g><rect x="926.2" y="221.6" width="6.4" height="6.4" fill="#F2E46C" stroke="#222" stroke-width="0.9"/><rect x="928.8" y="221" width="4.2" height="4.6" fill="#2CA8A0"/><rect x="933" y="221.4" width="2.6" height="3.4" fill="#D83040"/><path d="M932.6,228.6 l2.2,-2.2" stroke="#222" stroke-width="1"/></g>
<g><rect x="926.2" y="235.8" width="6.4" height="6.4" fill="#F2E46C" stroke="#222" stroke-width="0.9"/><rect x="928.8" y="235.2" width="4.2" height="4.6" fill="#2CA8A0"/><rect x="933" y="235.6" width="2.6" height="3.4" fill="#D83040"/><path d="M932.6,242.8 l2.2,-2.2" stroke="#222" stroke-width="1"/></g>
<g><rect x="927" y="249.4" width="7.4" height="7" fill="#1C1C1C"/><rect x="930.6" y="251.2" width="4.6" height="4.2" fill="#2CA8A0"/><path d="M928.4,252 c1,-1.6 2.6,-1.6 3.6,-0.6 M928.4,254.6 l2,1.6" stroke="#F2E46C" stroke-width="0.9"/></g>
<path d="M926.4,264.2 h3 v6 h-3 M935.4,264.2 h-3 v6 h3" fill="#C8F0F4" stroke="#7CC8D0" stroke-width="0.8"/><rect x="929.4" y="264.2" width="3" height="6" fill="#DDF6F8"/>
<rect x="927.2" y="277.2" width="7.4" height="6.8" fill="#E6F8FA" stroke="#3C8C98" stroke-width="0.8"/><rect x="928.8" y="279" width="4.4" height="3.2" fill="#A8E0E8"/>
<path d="M927.6,293.6 l3,1.6 4,0 M928,296.8 h6.6" stroke="#9CCCD4" stroke-width="0.8"/><path d="M928,293.6 l5.6,2.6" stroke="#D8EEF0" stroke-width="1"/>
<path d="M926.6,305.4 h4 c3,0.6 4.6,3 4.4,6 M926.6,308.4 h3.4 M926.6,311.4 h4" stroke="#3CB8C8" stroke-width="0.9"/><path d="M929.6,306.4 c2,1 3,2.8 3,5.2" stroke="#8CD8E0" stroke-width="1.4"/>
<path d="M929,319.2 c4,0.6 5.8,3.6 5.6,7.6" stroke="#3CB8C8" stroke-width="1.1"/><path d="M927.6,321.6 c2.6,0.4 4,2.6 4,5.6" stroke="#C8ECF0" stroke-width="1.6"/>
<path d="M928.6,333.4 l4,1.6 2,3 -2,3 -3.4,-1.6z" fill="#D8F2F4" stroke="#9CD0D8" stroke-width="0.7"/><path d="M930,333.6 l4.6,4.4" stroke="#6CC0CC" stroke-width="1"/>
<g stroke="#3C4C5C" stroke-width="0.8"><rect x="926.6" y="356.6" width="5" height="4.8" fill="#C8F0F4"/><path d="M929.4,355.2 v-1.6 h5.4 v5.4 h-2"/></g>
<path d="M930.8,366.4 v10 M926.6,371.4 l4.2,-3 4.2,3 -4.2,3z" stroke="#3C4450" stroke-width="0.8"/>
<path d="M927,381.4 l3,-1 5,6 -1,3 -3,0.6 -4.6,-6z" fill="#C8F0F4" stroke="#2C343C" stroke-width="0.8"/><path d="M927,381.4 l1.4,3.6" stroke="#2C343C" stroke-width="1.2"/>
<path d="M927,401.4 l3,-5 4.6,-1.4 -1,5 -3.6,2.6z" fill="#B8ECF2" stroke="#3C4C58" stroke-width="0.7"/><path d="M929,395.4 l5,5.6" stroke="#3C4C58" stroke-width="0.8"/>
<path d="M927,410 h7.6 v5 h-6 l-1.6,1.4z" fill="#F4F8F8" stroke="#3C444C" stroke-width="0.8"/>
<path d="M927.6,430 c2.6,2.6 2.6,6.2 0,8.8 M934.4,430 c-2.6,2.6 -2.6,6.2 0,8.8" stroke="#9A4CB8" stroke-width="1"/><path d="M931,429.6 v9.6" stroke="#B48CC8" stroke-width="0.7"/>
<g stroke="#C9C6BA" stroke-width="0.7"><path d="M928,444.4 h6.6 v7 M928,444.4 v3 h3.6 v4"/><path d="M928,458 h6.6 v7 M928,458 v3 h3.6 v4"/></g>
<g stroke="#B4B1A6" stroke-width="0.7"><rect x="927.6" y="471" width="6.4" height="8"/><path d="M927.6,473.6 h6.4 M927.6,476.2 h6.4"/></g>
<!-- col2 -->
<g stroke="#222" stroke-width="0.8" fill="#F8F8F4">
<rect x="946.6" y="104" width="8" height="6.6"/><path d="M946.6,103 v1.6 M954.6,103 v1.6 M946.6,106.2 h8 M946.6,108.4 h8"/>
<path d="M946.6,124.4 v-5 c2,-2.6 5,-3 8,-2.4 v7.4z"/><path d="M946.6,120.6 h8 M946.6,122.6 h8"/>
<path d="M946.6,138 v-3.6 l4,-3.6 4,3.6 v3.6z"/><path d="M946.6,134.4 h8 M946.6,136.2 h8"/>
<rect x="946.6" y="144.4" width="8" height="8.6"/><path d="M946.6,147.2 h8 M946.6,150 h8 M950.6,144.4 v8.6" stroke-width="1"/>
<rect x="946.6" y="161.6" width="8" height="5.6"/><path d="M948.4,161.4 c0,-3.6 4.4,-3.6 4.4,0 M946.6,164.4 h8"/>
<path d="M947,172 l3.4,3.6 M950.4,172 l-3.4,3.6 M952,172 h2.6 M952,172 v3.6 M952,173.8 h2"/><rect x="946.6" y="176.8" width="8" height="3.4"/>
</g>
<g stroke="#8C8A82" stroke-width="0.8"><rect x="946.8" y="188" width="7.6" height="5" fill="#C9C7BC"/><path d="M948.6,188 c0,-3.4 4,-3.4 4,0"/><path d="M946.6,195.2 h8" stroke-dasharray="1 0.6"/></g>
<!-- left tabs icons -->
<g stroke="#2C3468" stroke-width="0.7"><rect x="8.6" y="96.8" width="1.8" height="1.8"/><rect x="8.6" y="100.6" width="1.8" height="1.8"/><rect x="8.6" y="104.4" width="1.8" height="1.8"/><rect x="12.6" y="100.2" width="2" height="2"/></g>
<path d="M22.6,98.4 h3 l0.8,1 h3 v3.6 h-6.8z" fill="#E8D64C" stroke="#4C4618" stroke-width="0.6"/><path d="M25.6,102.4 h3 l0.8,1 h3 v3.6 h-6.8z" fill="#F2E470" stroke="#4C4618" stroke-width="0.6"/><circle cx="24.6" cy="99.6" r="1" stroke="#4C4618" stroke-width="0.5"/>
<path d="M38.4,100.4 h3 l0.8,-1 h4 v6.8 h-7.8z" fill="#EEDF5C" stroke="#4C4618" stroke-width="0.7"/><path d="M41.6,103 l2.4,-1 -0.6,2.4z" fill="#2C3CB0"/><circle cx="42.6" cy="103" r="1" fill="#3C4CC0"/>
<rect x="54.4" y="102" width="5" height="4.8" fill="#E8C83C" stroke="#4C4618" stroke-width="0.7"/><path d="M57,101.6 v-2.6 h5 v2 M59,97.6 h3.6" stroke="#222" stroke-width="0.9"/><rect x="60" y="99.6" width="2.6" height="6.4" fill="#C86C2C"/><path d="M57,98 h2.4" stroke="#3CA8B0" stroke-width="1.2"/>
<!-- button arrows -->
<g fill="#222"><path d="M36,114.8 h2.6 l-1.3,1.6z"/><path d="M95,114.8 h2.6 l-1.3,1.6z"/></g>
<!-- tree icons -->
<rect x="5.4" y="133.2" width="4.8" height="5.2" fill="#7CDCE4" stroke="#3C98A8" stroke-width="0.7"/>
<path d="M8.6,139 V244 M8.6,145.3 h6 M8.6,154.3 h6 M8.6,163.3 h6 M8.6,172.3 h6 M8.6,181.3 h6 M8.6,190.3 h6 M8.6,199.3 h6 M10.6,208.3 h4 M8.6,217.3 h6 M8.6,226.3 h6 M8.6,235.3 h6 M8.6,244.3 h6" stroke="#B9B7AE" stroke-width="0.6" stroke-dasharray="0.8 0.8"/>
<path d="M15.6,142.6 l5.4,5.4 M21,142.6 l-5.4,5.4 M18.3,141.8 v7 M15,145.3 h6.6" stroke="#9A4A2C" stroke-width="0.7"/>
<g stroke="#8A4A2C" stroke-width="0.9"><path d="M15.8,156.6 l1.8,-4.4 h4 l-1.8,4.4z"/><path d="M15.8,165.6 l1.8,-4.4 h4 l-1.8,4.4z"/><path d="M15.8,174.6 l1.8,-4.4 h4 l-1.8,4.4z"/></g>
<g stroke="#8A3A2C" stroke-width="1" stroke-dasharray="1.8 1"><path d="M16.6,184.4 l3.4,-6.2"/><path d="M16.6,193.4 l3.4,-6.2"/><path d="M16.6,202.4 l3.4,-6.2"/></g>
<rect x="6.8" y="206.4" width="3.6" height="3.6" fill="#FBFBF8" stroke="#8A8A84" stroke-width="0.6"/><path d="M7.6,208.2 h2 M8.6,207.2 v2" stroke="#222" stroke-width="0.6"/>
<rect x="15.6" y="207.6" width="3.6" height="3.6" fill="#E4F8FA" stroke="#3C98A8" stroke-width="0.7"/><path d="M18.6,207 l2.6,-2.6 M19.4,204.2 h2 v2" stroke="#3C98A8" stroke-width="0.7"/>
<g stroke="#5CC0CC" stroke-width="0.9"><path d="M15.6,215.4 h3 c1.6,0.4 2.4,1.6 2.4,3.6"/><path d="M15.6,224.4 h3 c1.6,0.4 2.4,1.6 2.4,3.6"/><path d="M15.6,233.4 h3 c1.6,0.4 2.4,1.6 2.4,3.6"/></g>
<g stroke="#BCE4EA" stroke-width="1.2"><path d="M16,217.4 c1.4,0.2 2.4,1 2.6,2.4"/><path d="M16,226.4 c1.4,0.2 2.4,1 2.6,2.4"/><path d="M16,235.4 c1.4,0.2 2.4,1 2.6,2.4"/></g>
<path d="M16.4,244.3 h3" stroke="#C82030" stroke-width="1.2"/><path d="M19,242.4 l2.6,1.9 -2.6,1.9z" fill="#C82030"/>
<!-- scrollbar arrows -->
<g stroke="#2C4C9C" stroke-width="1"><path d="M141.8,560 l-1.8,1.8 1.8,1.8"/><path d="M177.2,560 l1.8,1.8 -1.8,1.8"/><path d="M921.4,574.4 l1.8,1.8 1.8,-1.8"/></g>
<g stroke="#D2D0C4" stroke-width="0.9"><path d="M9.4,560 l-1.8,1.8 1.8,1.8"/><path d="M128.6,560 l1.8,1.8 -1.8,1.8"/></g>
<!-- status light -->
<circle cx="935.2" cy="572.4" r="1.2" fill="#A8A69C"/><circle cx="935.2" cy="574.8" r="1.2" fill="#A8A69C"/><circle cx="935.2" cy="577.4" r="1.7" fill="#24A82C" stroke="#146C1C" stroke-width="0.4"/>
<!-- splitter arrows -->
<g stroke="#2C3C7C" stroke-width="0.6"><path d="M187,276 l1,1.4 1,-1.4 M187,281 l1,1.4 1,-1.4 M190.4,307 l1.4,1 -1.4,1 M190.4,355 l1.4,1 -1.4,1 M187,380 l1,1.4 1,-1.4 M187,385 l1,1.4 1,-1.4"/></g>
<path d="M191,312 V352" stroke="#7C8CB8" stroke-width="0.5" stroke-dasharray="1 1"/>
</svg>

<span class="t" style="left:15px;top:4.18px;font-size:9.6px;color:#FFFFFF;font-weight:bold;transform:scaleX(0.786);">QUADER-RUNDUNG (Aktiv) - Pro/ENGINEER</span>
<span class="t" style="left:5px;top:20.68px;font-size:8.2px;color:#1A1A1A;font-weight:normal;transform:scaleX(0.810);">Datei</span>
<span class="t" style="left:27px;top:20.68px;font-size:8.2px;color:#1A1A1A;font-weight:normal;transform:scaleX(0.804);">Editieren</span>
<span class="t" style="left:59.5px;top:20.68px;font-size:8.2px;color:#1A1A1A;font-weight:normal;transform:scaleX(0.800);">Ansicht</span>
<span class="t" style="left:87px;top:20.68px;font-size:8.2px;color:#1A1A1A;font-weight:normal;transform:scaleX(0.789);">Einfügen</span>
<span class="t" style="left:119px;top:20.68px;font-size:8.2px;color:#1A1A1A;font-weight:normal;transform:scaleX(0.824);">Analyse</span>
<span class="t" style="left:149.5px;top:20.68px;font-size:8.2px;color:#1A1A1A;font-weight:normal;transform:scaleX(0.768);">Info</span>
<span class="t" style="left:166px;top:20.68px;font-size:8.2px;color:#1A1A1A;font-weight:normal;transform:scaleX(0.834);">Applikationen</span>
<span class="t" style="left:213px;top:20.68px;font-size:8.2px;color:#1A1A1A;font-weight:normal;transform:scaleX(0.810);">Startup TOOLS</span>
<span class="t" style="left:264.5px;top:20.68px;font-size:8.2px;color:#1A1A1A;font-weight:normal;transform:scaleX(0.863);">Tools</span>
<span class="t" style="left:288px;top:20.68px;font-size:8.2px;color:#1A1A1A;font-weight:normal;transform:scaleX(0.792);">Fenster</span>
<span class="t" style="left:316px;top:20.68px;font-size:8.2px;color:#1A1A1A;font-weight:normal;transform:scaleX(0.793);">Hilfe</span>
<span class="t" style="left:10px;top:52.19px;font-size:8.2px;color:#1A1A1A;font-weight:normal;transform:scaleX(0.808);">KE 9 (RUNDUNG_1) in Teil QUADER-RUNDUNG wird angezeigt.</span>
<span class="t" style="left:10px;top:60.19px;font-size:8.2px;color:#1A1A1A;font-weight:normal;transform:scaleX(0.808);">Elemente wie Bemaßungen, Schnitte, Leitkurven, Toleranzen, Oberflächengüten oder andere KEs zum Editieren wählen</span>
<span class="t" style="left:10px;top:68.19px;font-size:8.2px;color:#1A1A1A;font-weight:normal;transform:scaleX(0.798);">Elemente wie Bemaßungen, Schnitte oder KEs zum Editieren wählen</span>
<span class="t" style="left:10px;top:76.19px;font-size:8.2px;color:#1A1A1A;font-weight:normal;transform:scaleX(0.798);">Elemente wie Bemaßungen, Schnitte oder KEs zum Editieren wählen</span>
<span class="t" style="left:12.5px;top:111.39px;font-size:8.2px;color:#1A1A1A;font-weight:normal;transform:scaleX(0.799);">Zeigen</span>
<span class="t" style="left:52.5px;top:111.39px;font-size:8.2px;color:#1A1A1A;font-weight:normal;transform:scaleX(0.803);">Einstellungen</span>
<span class="t" style="left:137px;top:122.69px;font-size:8.2px;color:#1A1A1A;font-weight:normal;transform:scaleX(0.648);">KE...</span>
<span class="t" style="left:152.5px;top:122.69px;font-size:8.2px;color:#1A1A1A;font-weight:normal;transform:scaleX(0.801);">KE-ID</span>
<span class="t" style="left:176px;top:122.69px;font-size:8.2px;color:#1A1A1A;font-weight:normal;transform:scaleX(1.000);width:7.4px;overflow:hidden;">St</span>
<span class="t" style="left:13.75px;top:132.49px;font-size:8.2px;color:#1A1A1A;font-weight:normal;transform:scaleX(0.828);">QUADER-RUNDUNG.PRT</span>
<span class="t" style="left:23.75px;top:141.49px;font-size:8.2px;color:#1A1A1A;font-weight:normal;transform:scaleX(0.808);">KS_STD</span>
<span class="t" style="left:23.75px;top:150.49px;font-size:8.2px;color:#1A1A1A;font-weight:normal;transform:scaleX(0.795);">E_1_RE</span>
<span class="t" style="left:23.75px;top:159.49px;font-size:8.2px;color:#1A1A1A;font-weight:normal;transform:scaleX(0.783);">E_2_OB</span>
<span class="t" style="left:23.75px;top:168.49px;font-size:8.2px;color:#1A1A1A;font-weight:normal;transform:scaleX(0.783);">E_3_VO</span>
<span class="t" style="left:23.75px;top:177.49px;font-size:8.2px;color:#1A1A1A;font-weight:normal;transform:scaleX(0.803);">A_1_X</span>
<span class="t" style="left:23.75px;top:186.49px;font-size:8.2px;color:#1A1A1A;font-weight:normal;transform:scaleX(0.803);">A_2_Y</span>
<span class="t" style="left:23.75px;top:195.49px;font-size:8.2px;color:#1A1A1A;font-weight:normal;transform:scaleX(0.819);">A_3_Z</span>
<span class="t" style="left:24px;top:204.49px;font-size:8.2px;color:#FFFFFF;font-weight:normal;transform:scaleX(0.785);">Profil 1</span>
<span class="t" style="left:24px;top:213.49px;font-size:8.2px;color:#FFFFFF;font-weight:normal;transform:scaleX(0.786);">Rundung 1</span>
<span class="t" style="left:24px;top:222.49px;font-size:8.2px;color:#FFFFFF;font-weight:normal;transform:scaleX(0.786);">Rundung 2</span>
<span class="t" style="left:24px;top:231.49px;font-size:8.2px;color:#FFFFFF;font-weight:normal;transform:scaleX(0.786);">Rundung 3</span>
<span class="t" style="left:23.75px;top:240.49px;font-size:8.2px;color:#1A1A1A;font-weight:normal;transform:scaleX(0.806);">Hier einfügen</span>
<span class="t" style="left:779px;top:571.48px;font-size:8.2px;color:#1A1A1A;font-weight:normal;transform:scaleX(0.770);">4 gewählt</span>
<span class="t" style="left:827px;top:571.48px;font-size:8.2px;color:#1A1A1A;font-weight:normal;transform:scaleX(0.952);">Alle</span>
<span class="t" style="left:137px;top:141.49px;font-size:8.2px;color:#1A1A1A;font-weight:normal;transform:scaleX(0.833);">1</span>
<span class="t" style="left:152.5px;top:141.49px;font-size:8.2px;color:#1A1A1A;font-weight:normal;transform:scaleX(0.833);">1</span>
<span class="t" style="left:176px;top:141.49px;font-size:8.2px;color:#1A1A1A;font-weight:normal;transform:scaleX(1.000);width:7.4px;overflow:hidden;">Ru</span>
<span class="t" style="left:137px;top:150.49px;font-size:8.2px;color:#1A1A1A;font-weight:normal;transform:scaleX(0.833);">2</span>
<span class="t" style="left:152.5px;top:150.49px;font-size:8.2px;color:#1A1A1A;font-weight:normal;transform:scaleX(0.833);">4</span>
<span class="t" style="left:176px;top:150.49px;font-size:8.2px;color:#1A1A1A;font-weight:normal;transform:scaleX(1.000);width:7.4px;overflow:hidden;">Ru</span>
<span class="t" style="left:137px;top:159.49px;font-size:8.2px;color:#1A1A1A;font-weight:normal;transform:scaleX(0.833);">3</span>
<span class="t" style="left:152.5px;top:159.49px;font-size:8.2px;color:#1A1A1A;font-weight:normal;transform:scaleX(0.833);">7</span>
<span class="t" style="left:176px;top:159.49px;font-size:8.2px;color:#1A1A1A;font-weight:normal;transform:scaleX(1.000);width:7.4px;overflow:hidden;">Ru</span>
<span class="t" style="left:137px;top:168.49px;font-size:8.2px;color:#1A1A1A;font-weight:normal;transform:scaleX(0.833);">4</span>
<span class="t" style="left:152.5px;top:168.49px;font-size:8.2px;color:#1A1A1A;font-weight:normal;transform:scaleX(0.833);">9</span>
<span class="t" style="left:176px;top:168.49px;font-size:8.2px;color:#1A1A1A;font-weight:normal;transform:scaleX(1.000);width:7.4px;overflow:hidden;">Ru</span>
<span class="t" style="left:137px;top:177.49px;font-size:8.2px;color:#1A1A1A;font-weight:normal;transform:scaleX(0.833);">5</span>
<span class="t" style="left:152.5px;top:177.49px;font-size:8.2px;color:#1A1A1A;font-weight:normal;transform:scaleX(0.894);">11</span>
<span class="t" style="left:176px;top:177.49px;font-size:8.2px;color:#1A1A1A;font-weight:normal;transform:scaleX(1.000);width:7.4px;overflow:hidden;">Ru</span>
<span class="t" style="left:137px;top:186.49px;font-size:8.2px;color:#1A1A1A;font-weight:normal;transform:scaleX(0.833);">6</span>
<span class="t" style="left:152.5px;top:186.49px;font-size:8.2px;color:#1A1A1A;font-weight:normal;transform:scaleX(0.834);">16</span>
<span class="t" style="left:176px;top:186.49px;font-size:8.2px;color:#1A1A1A;font-weight:normal;transform:scaleX(1.000);width:7.4px;overflow:hidden;">Ru</span>
<span class="t" style="left:137px;top:195.49px;font-size:8.2px;color:#1A1A1A;font-weight:normal;transform:scaleX(0.833);">7</span>
<span class="t" style="left:152.5px;top:195.49px;font-size:8.2px;color:#1A1A1A;font-weight:normal;transform:scaleX(0.834);">20</span>
<span class="t" style="left:176px;top:195.49px;font-size:8.2px;color:#1A1A1A;font-weight:normal;transform:scaleX(1.000);width:7.4px;overflow:hidden;">Ru</span>
<span class="t" style="left:137px;top:204.49px;font-size:8.2px;color:#1A1A1A;font-weight:normal;transform:scaleX(0.833);">8</span>
<span class="t" style="left:152.5px;top:204.49px;font-size:8.2px;color:#1A1A1A;font-weight:normal;transform:scaleX(0.834);">35</span>
<span class="t" style="left:176px;top:204.49px;font-size:8.2px;color:#1A1A1A;font-weight:normal;transform:scaleX(1.000);width:7.4px;overflow:hidden;">Ru</span>
<span class="t" style="left:137px;top:213.49px;font-size:8.2px;color:#1A1A1A;font-weight:normal;transform:scaleX(0.833);">9</span>
<span class="t" style="left:152.5px;top:213.49px;font-size:8.2px;color:#1A1A1A;font-weight:normal;transform:scaleX(0.834);">63</span>
<span class="t" style="left:176px;top:213.49px;font-size:8.2px;color:#1A1A1A;font-weight:normal;transform:scaleX(1.000);width:7.4px;overflow:hidden;">Ru</span>
<span class="t" style="left:137px;top:222.49px;font-size:8.2px;color:#1A1A1A;font-weight:normal;transform:scaleX(0.834);">10</span>
<span class="t" style="left:152.5px;top:222.49px;font-size:8.2px;color:#1A1A1A;font-weight:normal;transform:scaleX(0.834);">186</span>
<span class="t" style="left:176px;top:222.49px;font-size:8.2px;color:#1A1A1A;font-weight:normal;transform:scaleX(1.000);width:7.4px;overflow:hidden;">Ru</span>
<span class="t" style="left:137px;top:231.49px;font-size:8.2px;color:#1A1A1A;font-weight:normal;transform:scaleX(0.894);">11</span>
<span class="t" style="left:152.5px;top:231.49px;font-size:8.2px;color:#1A1A1A;font-weight:normal;transform:scaleX(0.834);">257</span>
<span class="t" style="left:176px;top:231.49px;font-size:8.2px;color:#1A1A1A;font-weight:normal;transform:scaleX(1.000);width:7.4px;overflow:hidden;">Ru</span>
<div id="lframe" class="abs"></div><div id="rframe" class="abs"></div><div id="bframe" class="abs"></div>
</body></html>
